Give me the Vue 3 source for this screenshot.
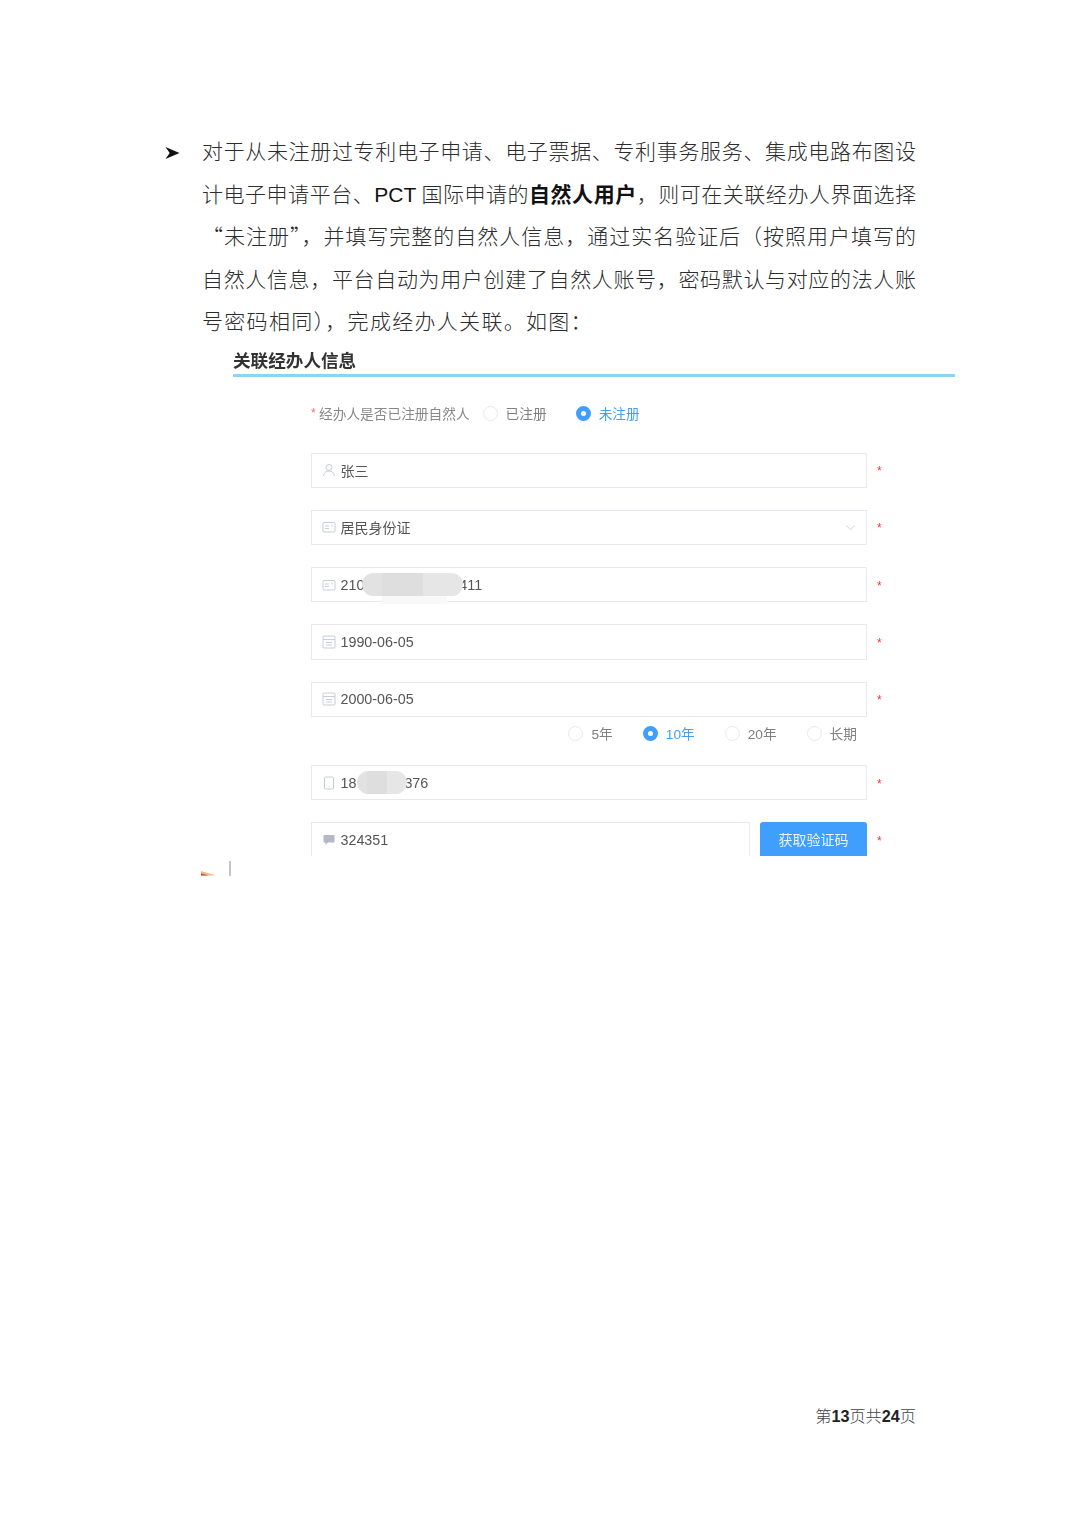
<script setup>
const lines = [
  [{ t: '对于从未注册过专利电子申请、电子票据、专利事务服务、集成电路布图设' }],
  [{ t: '计电子申请平台、' }, { t: 'PCT', latin: true }, { t: ' 国际申请的' }, { t: '自然人用户', b: true }, { t: '\uFF0C则可在关联经办人界面选择' }],
  [{ t: '\u201C未注册\u201D\uFF0C并填写完整的自然人信息\uFF0C通过实名验证后\uFF08按照用户填写的' }],
  [{ t: '自然人信息\uFF0C平台自动为用户创建了自然人账号\uFF0C密码默认与对应的法人账' }],
  [{ t: '号密码相同\uFF09\uFF0C完成经办人关联。如图\uFF1A' }],
]
const terms = [
  { label: '5年', on: false },
  { label: '10年', on: true },
  { label: '20年', on: false },
  { label: '长期', on: false },
]
</script>

<template>
  <div class="page">
    <section class="doc">
      <svg class="bullet" viewBox="0 0 16 14" width="15" height="14">
        <path d="M0.5 0.5 L15.5 7 L0.500 13.5 L5 7 Z" fill="#111" />
      </svg>
      <p v-for="(line, i) in lines" :key="i" class="line" :class="{ last: i === lines.length - 1 }">
        <span v-for="(s, j) in line" :key="j" :class="{ latin: s.latin, strong: s.b }">{{ s.t }}</span>
      </p>
    </section>

    <section class="figure">
      <h2 class="title">关联经办人信息</h2>
      <div class="form">
        <div class="question">
          <span class="req">*</span>
          <span class="qlabel">经办人是否已注册自然人</span>
          <span class="radio"><i class="dot"></i>已注册</span>
          <span class="radio on"><i class="dot"></i>未注册</span>
        </div>

        <div class="row first">
          <div class="field">
            <svg class="ico" viewBox="0 0 14 14"><circle cx="7" cy="4.500" r="3" /><path d="M1.500 13c.5-3.400 2.600-5 5.500-5s5 1.600 5.500 5" /></svg>
            <span class="val">张三</span>
          </div><span class="star">*</span>
        </div>

        <div class="row">
          <div class="field">
            <svg class="ico" viewBox="0 0 14 14"><rect x="1" y="2.500" width="12" height="9.500" rx="1" /><path d="M3 6h4M3 8.500h4M10 4.500v2" /></svg>
            <span class="val">居民身份证</span>
            <svg class="chev" viewBox="0 0 12 8"><path d="M1 1.500 6 6.500 11 1.500" /></svg>
          </div><span class="star">*</span>
        </div>

        <div class="row">
          <div class="field">
            <svg class="ico" viewBox="0 0 14 14"><rect x="1" y="2.500" width="12" height="9.500" rx="1" /><path d="M3 6h4M3 8.500h4M10 4.500v2" /></svg>
            <span class="val num">210</span><span class="gap-id"></span><span class="val num">411</span>
            <span class="mask mask-id"></span>
            <span class="mask-tail"></span>
          </div><span class="star">*</span>
        </div>

        <div class="row">
          <div class="field">
            <svg class="ico" viewBox="0 0 14 14"><rect x="1" y="1" width="12" height="12" rx="1" /><path d="M1 4.500h12M4 7.500h6M4 10h6" /></svg>
            <span class="val num">1990-06-05</span>
          </div><span class="star">*</span>
        </div>

        <div class="row">
          <div class="field">
            <svg class="ico" viewBox="0 0 14 14"><rect x="1" y="1" width="12" height="12" rx="1" /><path d="M1 4.500h12M4 7.500h6M4 10h6" /></svg>
            <span class="val num">2000-06-05</span>
          </div><span class="star">*</span>
        </div>

        <div class="terms">
          <span v-for="t in terms" :key="t.label" class="radio" :class="{ on: t.on }"><i class="dot"></i>{{ t.label }}</span>
        </div>

        <div class="row phone">
          <div class="field">
            <svg class="ico" viewBox="0 0 14 14"><rect x="2.500" y="1" width="9" height="12" rx="1" /><path d="M6.500 10.500h1" /></svg>
            <span class="val num">18</span><span class="gap-phone"></span><span class="val num">376</span>
            <span class="mask mask-phone"></span>
          </div><span class="star">*</span>
        </div>

        <div class="row code">
          <div class="field short">
            <svg class="ico solid" viewBox="0 0 14 14"><path d="M1.500 2h11v7.500H6L3.500 12V9.500h-2z" /></svg>
            <span class="val num">324351</span>
          </div>
          <button class="send" type="button">获取验证码</button>
          <span class="star">*</span>
        </div>
      </div>
    </section>

    <div class="scrap">
      <svg class="wedge" viewBox="0 0 15 6" width="15" height="6">
        <path d="M0 1 L15 5.500 L0 5.500 Z" fill="#f0b98a" />
        <path d="M0 3.500 L8 5.500 L0 5.500 Z" fill="#d9442c" />
      </svg>
      <span class="rule"></span>
    </div>

    <footer class="foot">第<b>13</b>页共<b>24</b>页</footer>
  </div>
</template>

<style scoped>
.page {
  width: 1080px;
  height: 1527px;
  box-sizing: border-box;
  padding-top: 129px;
  display: flex;
  flex-direction: column;
  background: #fff;
  overflow: hidden;
  font-family: "Noto Sans CJK SC", "Liberation Sans", sans-serif;
}
.doc {
  position: relative;
  margin-left: 202px;
  width: 714px;
  color: #2c2c2c;
  font-size: 21px;
  font-weight: 300;
  line-height: 42.5px;
}
.bullet {
  position: absolute;
  left: -37px;
  top: 17px;
}
.line {
  margin: 0;
  height: 42.5px;
  white-space: nowrap;
  text-align: justify;
  text-align-last: justify;
}
.line.last {
  text-align-last: left;
  letter-spacing: 1.300px;
}
.latin {
  font-family: "Liberation Sans", sans-serif;
  color: #111;
}
.strong {
  font-weight: 700;
  color: #111;
}
.figure {
  margin-left: 233px;
  width: 722px;
  filter: blur(0.35px);
}
.title {
  margin: 0;
  height: 32px;
  border-bottom: 3px solid #8fd3f2;
  color: #333;
  font-size: 17.600px;
  font-weight: 700;
  line-height: 36px;
}
.form {
  height: 479px;
  box-sizing: border-box;
  padding-left: 78px;
  overflow: hidden;
  font-family: "Liberation Sans", "Noto Sans CJK SC", sans-serif;
}
.question {
  display: flex;
  align-items: center;
  height: 20px;
  margin-top: 26px;
  color: #888;
  font-size: 13.700px;
}
.req {
  width: 8px;
  color: #f56c6c;
  font-size: 12px;
}
.qlabel {
  margin-right: 13px;
}
.radio {
  display: inline-flex;
  align-items: center;
  gap: 8px;
  color: #808080;
  font-size: 13.700px;
}
.question .radio + .radio {
  margin-left: 29px;
}
.dot {
  box-sizing: border-box;
  width: 15px;
  height: 15px;
  margin-top: 2px;
  border: 1.500px solid #e6e8f0;
  border-radius: 50%;
  background: #fff;
}
.radio.on {
  color: #409eff;
}
.radio.on .dot {
  border: 5px solid #409eff;
}
.row {
  display: flex;
  align-items: center;
  width: 576px;
  margin-top: 22px;
}
.row.first {
  margin-top: 30px;
}
.row.phone {
  margin-top: 16px;
}
.row.code {
  height: 35px;
  align-items: flex-start;
}
.field {
  position: relative;
  flex: none;
  display: flex;
  align-items: center;
  box-sizing: border-box;
  width: 556px;
  height: 35.300px;
  padding-left: 9.500px;
  border: 1.500px solid #e8e8ee;
  background: #fff;
}
.field.short {
  width: 439px;
  border-bottom: 0;
}
.ico {
  flex: none;
  width: 14px;
  height: 14px;
  margin-right: 5px;
  fill: none;
  stroke: #c8ccd8;
  stroke-width: 1;
}
.ico.solid {
  fill: #b4b8c8;
  stroke: none;
}
.val {
  color: #555;
  font-size: 14px;
}
.val.num {
  font-size: 14.300px;
}
.gap-id {
  width: 95px;
}
.gap-phone {
  width: 48px;
}
.mask {
  position: absolute;
  top: 5px;
  height: 23px;
  border-radius: 12px;
  background: linear-gradient(90deg, #e2e2e2 0 20%, #dedede 20% 60%, #e6e6e6 60% 100%);
}
.mask-id {
  left: 50px;
  width: 101px;
}
.mask-tail {
  position: absolute;
  left: 70px;
  top: 28px;
  width: 65px;
  height: 8px;
  background: #f8f8f8;
}
.mask-phone {
  left: 45px;
  width: 50px;
}
.star {
  flex: none;
  width: 20px;
  padding-left: 10px;
  padding-top: 2px;
  box-sizing: border-box;
  color: #f33;
  font-size: 12px;
  line-height: 12px;
}
.chev {
  position: absolute;
  right: 10px;
  top: 13px;
  width: 11px;
  height: 7px;
  fill: none;
  stroke: #c8ccd4;
  stroke-width: 1;
}
.terms {
  display: flex;
  justify-content: flex-end;
  align-items: center;
  gap: 30px;
  width: 546px;
  height: 32px;
}
.send {
  flex: none;
  width: 107px;
  height: 35px;
  margin-left: 10px;
  padding: 0 0 2px;
  border: 0;
  border-radius: 3px 3px 0 0;
  background: #409eff;
  color: #e8f3ff;
  font-family: inherit;
  font-size: 14px;
}
.code .star {
  align-self: center;
}
.scrap {
  display: flex;
  align-items: flex-end;
  height: 15px;
  margin-top: 5px;
  margin-left: 201px;
}
.wedge {
  display: block;
}
.rule {
  width: 1.500px;
  height: 15px;
  margin-left: 13px;
  background: #c4c4c4;
}
.foot {
  margin-top: auto;
  padding-bottom: 99px;
  width: 916px;
  text-align: right;
  color: #444;
  font-size: 16.200px;
  line-height: 24px;
  font-weight: 300;
}
.foot b {
  font-family: "Liberation Sans", sans-serif;
  font-weight: 700;
  color: #222;
}
</style>
